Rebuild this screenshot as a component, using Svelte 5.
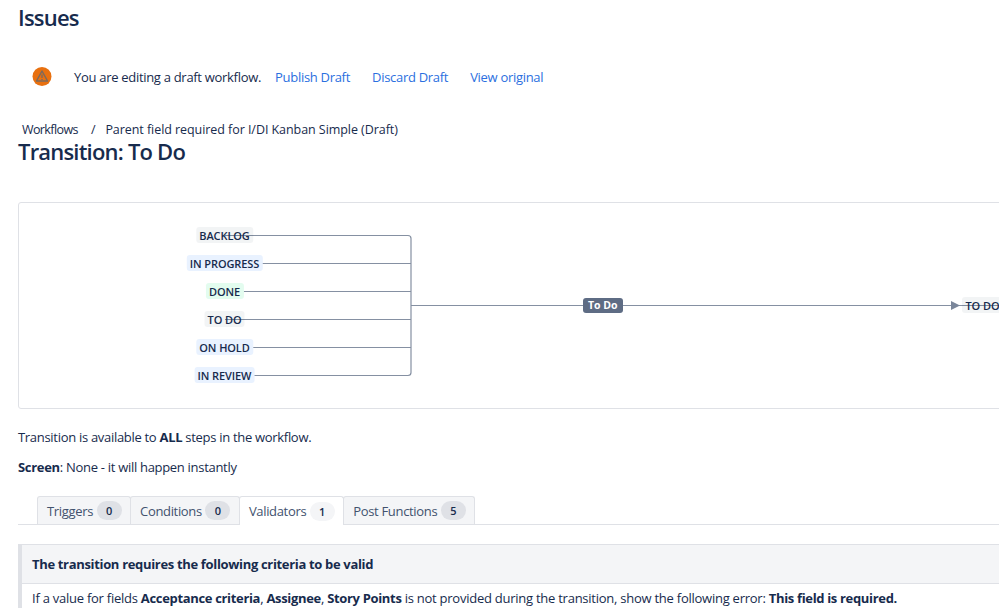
<script>
  const sources = [
    { label: 'BACKLOG', top: 24, kind: 'grey' },
    { label: 'IN PROGRESS', top: 52, kind: 'blue' },
    { label: 'DONE', top: 80, kind: 'green' },
    { label: 'TO DO', top: 108, kind: 'grey' },
    { label: 'ON HOLD', top: 136, kind: 'blue' },
    { label: 'IN REVIEW', top: 164, kind: 'blue' }
  ];

  const tabs = [
    { name: 'Triggers', count: 0 },
    { name: 'Conditions', count: 0 },
    { name: 'Validators', count: 1, active: true },
    { name: 'Post Functions', count: 5 }
  ];
</script>

<div class="page">
  <h1>Issues</h1>

  <div class="draft-bar">
    <svg class="warn" width="20" height="20" viewBox="0 0 20 20">
      <circle cx="10" cy="9.5" r="9.5" fill="#e8700f" />
      <path d="M10 4 L15.5 14 H4.5 Z" fill="none" stroke="#7d6a5c" stroke-width="1.5" stroke-linejoin="round" />
      <path d="M10 7.5 V11 M10 12 V13" stroke="#7d6a5c" stroke-width="1.4" />
    </svg>
    <span class="draft-text">You are editing a draft workflow.</span>
    <a href="#publish">Publish Draft</a>
    <a href="#discard">Discard Draft</a>
    <a href="#original">View original</a>
  </div>

  <div class="crumbs">
    <span class="root">Workflows</span>
    <span class="sep">/</span>
    <span>Parent field required for I/DI Kanban Simple (Draft)</span>
  </div>
  <h2>Transition: To Do</h2>

  <div class="diagram">
    <svg class="lines" width="1100" height="205">
      <g fill="none" stroke="#8590a2" stroke-width="1.2">
        <path d="M206 32.5 H389 a3 3 0 0 1 3 3 V169.5 a3 3 0 0 1 -3 3 H206" />
        <path d="M206 60.5 H392 M206 88.5 H392 M206 116.5 H392 M206 144.5 H392 M392 102.5 H1100" />
      </g>
      <path d="M932 98 L941 102.5 L932 107 Z" fill="#7a869a" />
    </svg>

    {#each sources as s}
      <span class="status {s.kind}" style="top: {s.top}px">{s.label}</span>
    {/each}

    <span class="transition-name">To Do</span>
    <span class="status grey target">TO DO</span>
  </div>

  <p class="first">Transition is available to <b>ALL</b> steps in the workflow.</p>
  <p><b>Screen</b>: None - it will happen instantly</p>

  <div class="tabs">
    {#each tabs as t}
      <div class="tab" class:active={t.active}>
        {t.name}<span class="count">{t.count}</span>
      </div>
    {/each}
  </div>

  <div class="panel">
    <div class="panel-head">The transition requires the following criteria to be valid</div>
    <div class="panel-body">
      If a value for fields <b>Acceptance criteria</b>, <b>Assignee</b>, <b>Story Points</b> is not provided during the transition, show the following error: <b>This field is required.</b>
    </div>
  </div>
</div>

<style>
  :global(body) {
    margin: 0;
    background: #fff;
    overflow: hidden;
  }

  .page {
    width: 999px;
    height: 608px;
    overflow: hidden;
    box-sizing: border-box;
    padding-left: 18px;
    font-family: "Open Sans", "Noto Sans", sans-serif;
    font-size: 13px;
    letter-spacing: -0.3px;
    color: #172b4d;
  }

  h1, h2 {
    margin: 0;
    font-weight: 600;
    font-size: 22px;
    letter-spacing: -0.8px;
  }

  h1 {
    line-height: 30px;
    padding-top: 2px;
  }

  h2 {
    line-height: 26px;
  }

  .draft-bar {
    display: flex;
    align-items: center;
    height: 20px;
    margin-top: 35px;
    padding-left: 14px;
  }

  .warn {
    margin-right: 22px;
  }

  .draft-text {
    margin-right: 14px;
  }

  .draft-bar a {
    color: #2b6fe0;
    text-decoration: none;
    margin-right: 22px;
  }

  .crumbs {
    margin-top: 35px;
    padding-left: 4px;
    display: flex;
    line-height: 16px;
    font-size: 12.5px;
    letter-spacing: -0.06px;
  }

  .root {
    letter-spacing: -0.6px;
  }

  .sep {
    margin: 0 10px 0 13px;
  }

  .diagram {
    position: relative;
    width: 1100px;
    height: 205px;
    margin-top: 38px;
    border: 1px solid #dfe1e6;
    border-radius: 3px;
  }

  .lines {
    position: absolute;
    left: 0;
    top: 0;
  }

  .status {
    position: absolute;
    left: 205.5px;
    transform: translateX(-50%);
    height: 16px;
    line-height: 18px;
    padding: 0 3.5px;
    border-radius: 3px;
    font-size: 11px;
    font-weight: 600;
    letter-spacing: -0.1px;
    white-space: nowrap;
    color: #172b4d;
  }

  .grey { background: rgba(9, 30, 66, 0.05); }
  .blue { background: #e9f2ff; }
  .green { background: #e3fcef; }

  .target {
    left: 943px;
    top: 94px;
    transform: none;
  }

  .transition-name {
    position: absolute;
    left: 564px;
    top: 95px;
    height: 15px;
    line-height: 15px;
    padding: 0 5px;
    border-radius: 3px;
    background: #5e6c84;
    color: #fff;
    font-size: 10.5px;
    font-weight: 700;
    letter-spacing: 0;
  }

  p {
    margin: 12px 0 0;
    line-height: 18px;
    letter-spacing: -0.3px;
  }

  p.first {
    margin-top: 19px;
  }

  .tabs {
    display: flex;
    margin-top: 20px;
    padding-left: 20px;
    border-bottom: 1px solid #dfe1e6;
    height: 28px;
  }

  .tab {
    display: flex;
    align-items: center;
    gap: 3.5px;
    height: 28px;
    box-sizing: border-box;
    padding: 0 8.5px 0 9px;
    background: #f4f5f7;
    border: 1px solid #dfe1e6;
    border-bottom: none;
    margin-left: -1px;
    color: #42526e;
    border-radius: 3px 3px 0 0;
    letter-spacing: -0.33px;
  }

  .tab.active {
    background: #fff;
    height: 29px;
    position: relative;
  }

  .count {
    width: 25px;
    height: 19px;
    line-height: 19px;
    text-align: center;
    border-radius: 10px;
    background: #dfe1e6;
    font-size: 11px;
    font-weight: 600;
    letter-spacing: 0;
    color: #172b4d;
  }

  .active .count {
    background: #f4f5f7;
  }

  .panel {
    margin-top: 19px;
    width: 1100px;
    border-left: 4px solid #dfe1e6;
    border-top: 1px solid #dfe1e6;
  }

  .panel-head {
    height: 38px;
    line-height: 38px;
    padding-left: 10px;
    background: #f4f5f7;
    font-weight: 700;
    letter-spacing: -0.33px;
    border-bottom: 1px solid #dfe1e6;
  }

  .panel-body {
    padding: 5px 10px;
    line-height: 18px;
    letter-spacing: -0.25px;
    white-space: nowrap;
  }

  .panel-body b {
    letter-spacing: -0.33px;
  }
</style>
